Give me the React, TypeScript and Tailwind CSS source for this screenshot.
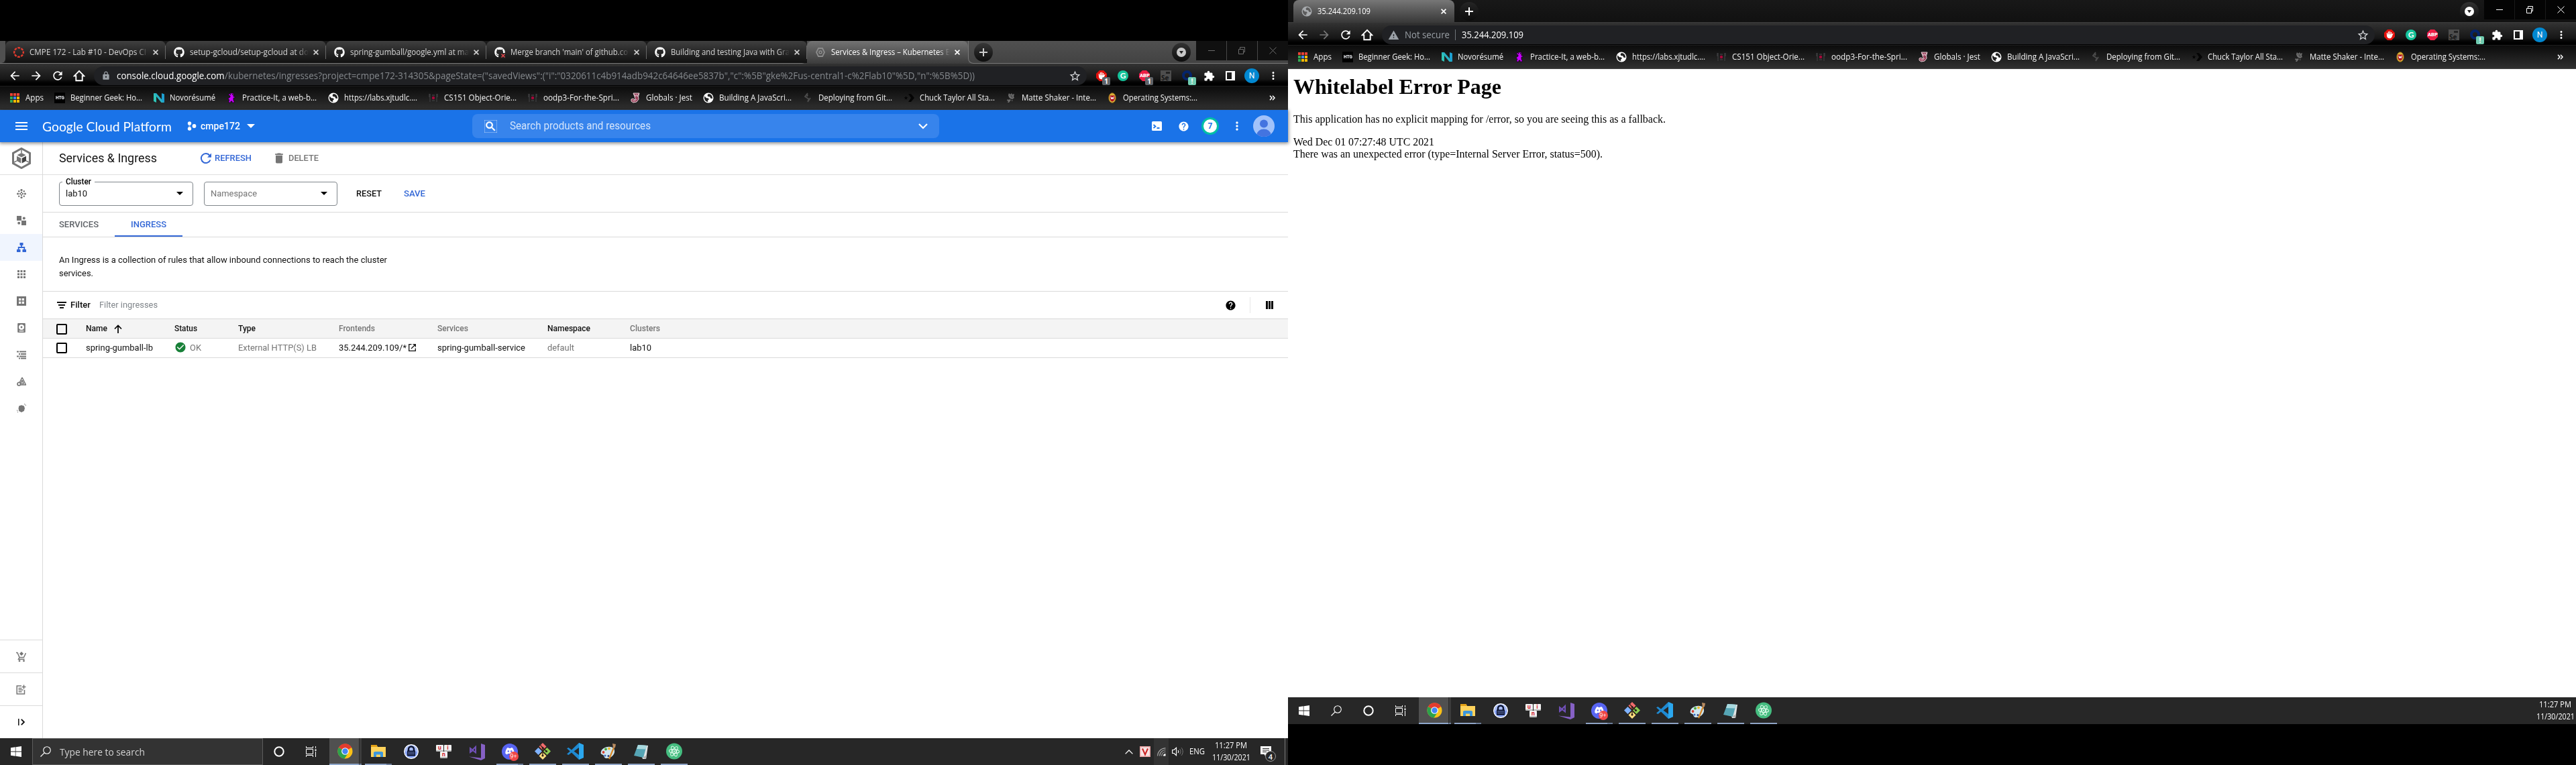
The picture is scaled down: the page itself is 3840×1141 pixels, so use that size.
import React, { useLayoutEffect, useRef } from "react";
import { FaGithub } from "react-icons/fa";
import {
  MdLock, MdStarBorder, MdExtension, MdMoreVert, MdSearch, MdDelete,
  MdCheckCircle, MdHelp, MdWarning, MdRefresh, MdArrowBack, MdArrowForward,
} from "react-icons/md";

/** One line of text drawn to an exact width. */
function Fit({ w, className = "", children }: { w: number; className?: string; children: React.ReactNode }) {
  const ref = useRef<HTMLSpanElement>(null);
  useLayoutEffect(() => {
    const el = ref.current;
    if (!el) return;
    el.style.transform = "none";
    const natural = el.getBoundingClientRect().width;
    if (natural > 0) el.style.transform = `scaleX(${w / natural})`;
  }, [w, children]);
  return (
    <span className={"block shrink-0 whitespace-nowrap " + className} style={{ width: w }}>
      <span ref={ref} className="inline-block origin-left">{children}</span>
    </span>
  );
}

/* ---------- favicons ---------- */

const Globe = ({ color = "#fff", hole = "#222" }: { color?: string; hole?: string }) => (
  <svg width="16" height="16" viewBox="0 0 16 16">
    <circle cx="8" cy="8" r="7.5" fill={color} />
    <path d="M2.3 5.2 5 8.2l3 .3.8 2-1.8 1.3.4 2.2C4.500 14 2 11 1.900 8z" fill={hole} />
    <path d="M8.200 2 6.500 3.800l.8 2.200 2.800.3 1.300 2.400 2.600.2C14.300 5 11.600 2 8.200 2z" fill={hole} />
  </svg>
);

const Canvas = () => (
  <svg width="16" height="16" viewBox="0 0 16 16">
    <circle cx="8" cy="8" r="6.800" fill="none" stroke="#e23b2e" strokeWidth="2.400" strokeDasharray="3.800 1.540" strokeDashoffset="1.900" />
  </svg>
);

const AppsGrid = () => {
  const cols = ["#ea4335", "#ea4335", "#ea4335", "#34a853", "#4285f4", "#fbbc04", "#34a853", "#fbbc04", "#fbbc04"];
  return (
    <span className="grid grid-cols-3 gap-px">
      {cols.map((c, i) => <span key={i} className="size-1" style={{ background: c }} />)}
    </span>
  );
};

const Htg = () => (
  <span className="flex size-4 items-center justify-center bg-black">
    <Fit w={13} className="font-[Roboto] text-[8px] leading-none font-black text-gray-200">HTG</Fit>
  </span>
);

const Novo = () => (
  <svg width="16" height="14" viewBox="0 0 16 14">
    <path d="M0 0 4 1v13L0 12z" fill="#2fc4b6" />
    <path d="M0 0h4l12 14h-4.500z" fill="#29b1c4" />
    <path d="M12 0l4 1.500V14l-4-3z" fill="#1e9fd0" />
  </svg>
);

const Dragon = () => (
  <svg width="14" height="16" viewBox="0 0 14 16">
    <path d="M5 1h5v5h2v2h-2v4h1v3H8v-2H6v2H3v-2l1-2-2-1 1-2 2-1V5L3 4V2h2z" fill="#c800ff" stroke="#1a001f" strokeWidth=".8" />
    <rect x="5" y="2" width="1.200" height="1.500" fill="#111" /><rect x="8" y="2" width="1.200" height="1.500" fill="#111" />
  </svg>
);

const RedDot = () => (
  <svg width="16" height="16" viewBox="0 0 16 16">
    <path d="M3 2v12M13 2v12M6 4h4M6 12h4M2 2v5M14 2v5" stroke="#3c3c3e" strokeWidth="1.300" fill="none" />
    <circle cx="8" cy="8" r="2.200" fill="#a5093a" />
  </svg>
);

const Jest = () => (
  <svg width="14" height="16" viewBox="0 0 14 16">
    <path d="M4 1h9l-1.500 5 .5 4-3 4-5 1-3-2v-3l3-1 2 2 1-1-1-4z" fill="#99425b" stroke="#efe0e4" strokeWidth=".9" />
    <path d="M5 2l2 4 1.500-3L10 6l2-4M3 11l2 2 4-3" stroke="#efe0e4" strokeWidth=".8" fill="none" />
  </svg>
);

const Netlify = () => (
  <svg width="12" height="16" viewBox="0 0 12 16">
    <path d="M6 1 2 6l6 4-2 3M6 3l-1 3M10 8l-4 6" stroke="#4d4d4d" strokeWidth="1.800" fill="none" />
  </svg>
);

const Converse = () => (
  <svg width="16" height="16" viewBox="0 0 16 16">
    <path d="M3.500 5l.8 2 2 .2-1.500 1.300.5 2.100-1.800-1.100-1.800 1.100.5-2.100L.700 7.200l2-.2z" fill="#050505" />
    <path d="M7 2h4l5 6-5 6H7l4-6z" fill="#050505" />
  </svg>
);

const Shaker = () => (
  <svg width="14" height="16" viewBox="0 0 14 16">
    <path d="M4 1l2 2 2-2 1 2 3-1-1 4 1 2-3 2-3-1-2-2-1-3zM5 10l2 1-3 4H2l1-2-2-1 1-2 2 1zM8 11l2 1-2 1z" fill="#6d6d6d" />
    <path d="M5 4l4 3M8 3l1 5" stroke="#333" strokeWidth=".7" />
  </svg>
);

const Crest = () => (
  <svg width="12" height="16" viewBox="0 0 12 16">
    <ellipse cx="6" cy="8" rx="5.400" ry="7.400" fill="#d9b23a" stroke="#6b4d0c" strokeWidth=".8" />
    <path d="M2.500 4.500h7V9c0 2-1.500 3.500-3.500 4.500C4 12.500 2.500 11 2.500 9z" fill="#b01020" />
    <path d="M3.800 6l1 4L6 7l1.200 3 1-4" stroke="#fff" strokeWidth="1" fill="none" />
  </svg>
);

const GcpHex = () => (
  <svg width="14" height="16" viewBox="0 0 14 16">
    <path d="M4 2h6l3 6-3 6H4L1 8z" fill="none" stroke="#8c8c8c" strokeWidth="1.800" />
    <circle cx="7" cy="8" r="2" fill="none" stroke="#8c8c8c" strokeWidth="1.500" />
  </svg>
);

const GithubFailed = () => (
  <span className="relative block size-4">
    <FaGithub size={16} color="#fff" />
    <svg className="absolute right-[-1px] bottom-[-1px] bg-[#222]" width="8" height="8" viewBox="0 0 8 8">
      <path d="M1.500 1.500l5 5M6.500 1.500l-5 5" stroke="#e5484d" strokeWidth="1.500" />
    </svg>
  </span>
);

/* ---------- browser chrome ---------- */

const Cross = ({ color = "#d0d0d0" }: { color?: string }) => (
  <svg width="8" height="8" viewBox="0 0 8 8"><path d="M.6.6l6.800 6.800M7.400.6.6 7.400" stroke={color} strokeWidth="1.700" /></svg>
);

function WindowButtons({ dim }: { dim: boolean }) {
  const c = dim ? "#6b6b6b" : "#fff";
  const cell = "flex w-[45px] items-center justify-center " + (dim ? "bg-[#101010]" : "bg-[#040404]");
  return (
    <div className={"flex h-[29px] gap-px " + (dim ? "bg-[#484848]" : "bg-[#1a1a1a]")}>
      <div className={cell}><svg width="10" height="10"><path d="M0 4.500h10" stroke={c} /></svg></div>
      <div className={cell}><svg width="11" height="11"><path d="M.5 3.500h7v7h-7zM2.500 3.500v-3h7v7h-2" fill="none" stroke={c} /></svg></div>
      <div className={cell}><svg width="11" height="11"><path d="M.5.5l10 10M10.500.5l-10 10" stroke={c} /></svg></div>
    </div>
  );
}

function TabSearch({ dim }: { dim: boolean }) {
  return (
    <div className="mr-2 flex h-[28px] w-[28px] items-center justify-center self-center rounded-full bg-linear-to-b from-[#333] to-[#0d0d0d]">
      <svg width="14" height="14" viewBox="0 0 14 14"><circle cx="7" cy="7" r="7" fill={dim ? "#c8c8c8" : "#fff"} /><path d="M4 5h6L7 9.500z" fill="#222" /></svg>
    </div>
  );
}

const NewTab = ({ dim }: { dim: boolean }) => (
  <div className={"ml-2 flex size-[28px] items-center justify-center self-center rounded-full bg-linear-to-b " + (dim ? "from-[#383838] to-[#0d0d0d]" : "from-[#252525] to-[#0c0c0c]")}>
    <svg width="12" height="12"><path d="M6 0v12M0 6h12" stroke={dim ? "#ccc" : "#fff"} strokeWidth="2" /></svg>
  </div>
);

type TabInfo = { icon: React.ReactNode; title: string; w: number };

const TABS: TabInfo[] = [
  { icon: <Canvas />, title: "CMPE 172 - Lab #10 - DevOps CI", w: 174 },
  { icon: <FaGithub size={16} color="#fff" />, title: "setup-gcloud/setup-gcloud at do", w: 177 },
  { icon: <FaGithub size={16} color="#fff" />, title: "spring-gumball/google.yml at ma", w: 177 },
  { icon: <GithubFailed />, title: "Merge branch 'main' of github.co", w: 175 },
  { icon: <FaGithub size={16} color="#fff" />, title: "Building and testing Java with Gra", w: 177 },
];

function LeftTabs() {
  return (
    <div className="flex h-[34px] bg-linear-to-b from-[#505050] to-[#424242]">
      <div className="flex w-[1203px] rounded-br-lg border-b border-[#787878] bg-[#1a1a1a]">
        <div className="w-2 rounded-br-md bg-[#505050]" />
        {TABS.map((t, i) => (
          <div key={i} className="flex w-[239px] items-center rounded-t-lg bg-linear-to-b from-[#404040] to-[#111]">
            <span className="ml-3 flex w-4 justify-center">{t.icon}</span>
            <span className="ml-2 w-[177px] overflow-hidden mask-r-from-90%">
              <Fit w={t.w} className="font-['Open_Sans'] text-[12px] leading-5 text-[#d6d6d6]">{t.title}</Fit>
            </span>
            <span className="ml-[7px]"><Cross /></span>
            <span className="ml-auto h-5 w-px bg-[#666]" />
          </div>
        ))}
      </div>
      <div className="flex w-[240px] items-center rounded-t-lg bg-linear-to-b from-[#737373] to-[#3c3c3c]">
        <span className="ml-3 flex w-4 justify-center"><GcpHex /></span>
        <span className="ml-2 w-[177px] overflow-hidden mask-r-from-90%">
          <Fit w={177} className="font-['Open_Sans'] text-[12px] leading-5 text-white">Services &amp; Ingress – Kubernetes E</Fit>
        </span>
        <span className="ml-[7px]"><Cross color="#fff" /></span>
      </div>
      <div className="flex flex-1 rounded-bl-lg border-b border-l border-[#787878]">
        <NewTab dim />
        <div className="ml-auto flex"><TabSearch dim /><WindowButtons dim /></div>
      </div>
    </div>
  );
}

function RightTabs() {
  return (
    <div className="flex h-[34px] border-b border-[#3d3d3d] bg-linear-to-b from-[#181818] to-[#111]">
      <div className="ml-2 flex h-[34px] w-[240px] items-center rounded-t-lg bg-linear-to-b from-[#777] to-[#383838]">
        <span className="ml-3"><Globe color="#a8abae" hole="#5c5c5c" /></span>
        <Fit w={79} className="ml-2 font-['Open_Sans'] text-[12px] leading-5 text-white">35.244.209.109</Fit>
        <span className="mr-3 ml-auto"><Cross color="#fff" /></span>
      </div>
      <NewTab dim={false} />
      <div className="ml-auto flex"><TabSearch dim={false} /><WindowButtons dim={false} /></div>
    </div>
  );
}

const Cell = ({ children }: { children: React.ReactNode }) => (
  <div className="flex h-[28px] w-8 shrink-0 items-center justify-center">{children}</div>
);

const Badge = ({ children, className }: { children: React.ReactNode; className: string }) => (
  <span className={"absolute top-[10px] left-[9px] flex h-3 w-3 items-center justify-center rounded-[2px] font-['Open_Sans'] text-[10px] leading-none font-bold text-white " + className}>{children}</span>
);

function Toolbar({ dim, children }: { dim: boolean; children: React.ReactNode }) {
  const home = <svg width="18" height="18" viewBox="0 0 18 18"><path d="M9 1.800 1.800 9.200h2.500V16.200h9.400V9.200h2.500z" fill="none" stroke="#fff" strokeWidth="1.900" /></svg>;
  return (
    <div className="flex h-[33px] items-start bg-linear-to-b from-[#333] via-[#161616] via-70% to-black pt-1 pl-[6px]">
      <Cell><MdArrowBack size={20} color="#fff" /></Cell>
      <Cell><MdArrowForward size={20} color={dim ? "#fff" : "#777"} /></Cell>
      <Cell><MdRefresh size={20} color="#fff" /></Cell>
      <Cell>{home}</Cell>
      <div className="mr-[6px] ml-[6px] flex h-7 w-[1480px] shrink-0 items-center rounded-full bg-[#202124] pr-2">
        {children}
        <MdStarBorder size={19} color="#d5d7da" className="ml-auto" />
      </div>
      <Cell>
        <span className="relative block size-4">
          <svg width="16" height="16" viewBox="0 0 16 16"><path d="M5 0h6l5 5v6l-5 5H5l-5-5V5z" fill="#e3100c" /><path d="M4.500 8.500V5M6.500 8V3M8.500 8V2.800M10.500 8V4M4.500 8c0 6 6 6 7 1l1-2-2 1z" stroke="#fff" strokeWidth="1.300" fill="#fff" /></svg>
          {dim && <Badge className="bg-[#5f6368]">1</Badge>}
        </span>
      </Cell>
      <Cell><span className="flex size-4 items-center justify-center rounded-full bg-[#15c39a] font-[Lato] text-[12px] leading-none font-bold text-white">G</span></Cell>
      <Cell>
        <span className="relative block size-4">
          <svg width="16" height="16" viewBox="0 0 16 16"><path d="M5 0h6l5 5v6l-5 5H5l-5-5V5z" fill="#ed1e45" /></svg>
          <span className="absolute top-1 left-[1px] font-[Roboto] text-[7.500px] leading-[8px] font-black text-white">ABP</span>
          {dim && <Badge className="bg-[#5f6368]">1</Badge>}
        </span>
      </Cell>
      <Cell>
        <span className="relative block size-4 bg-[#4d4d4d]">
          <span className="absolute bottom-0 left-[1px] font-['Open_Sans'] text-[10px] leading-[10px] font-bold text-[#161616]">Se</span>
          <span className="absolute top-[2px] right-[2px] h-[3px] w-[6px] bg-[#222]" />
        </span>
      </Cell>
      <Cell>
        <span className="relative block size-4">
          <span className="block size-[15px] rounded-full border-4 border-[#04246b]" />
          <Badge className="bg-[#6fcbb0]">!</Badge>
        </span>
      </Cell>
      <Cell><MdExtension size={17} color="#fff" /></Cell>
      <Cell><span className="h-[14px] w-[14px] border-2 border-r-[5px] border-white" /></Cell>
      <Cell><span className="flex size-[22px] items-center justify-center rounded-full bg-[#0288d1] font-[Roboto] text-[12px] leading-none text-white">N</span></Cell>
      <Cell><MdMoreVert size={18} color="#fff" /></Cell>
    </div>
  );
}

/* icon, label, label width, distance to the next bookmark */
const BOOKMARKS: [React.ReactNode, string, number, number][] = [
  [<AppsGrid />, "Apps", 27, 67],
  [<Htg />, "Beginner Geek: Ho...", 107, 148],
  [<Novo />, "Novorésumé", 68, 108],
  [<Dragon />, "Practice-It, a web-b...", 111, 152],
  [<Globe />, "https://labs.xjtudlc....", 109, 149],
  [<RedDot />, "CS151 Object-Orie...", 108, 148],
  [<RedDot />, "oodp3-For-the-Spri...", 113, 153],
  [<Jest />, "Globals · Jest", 69, 109],
  [<Globe />, "Building A JavaScri...", 108, 148],
  [<Netlify />, "Deploying from Git...", 110, 151],
  [<Converse />, "Chuck Taylor All Sta...", 112, 152],
  [<Shaker />, "Matte Shaker - Inte...", 111, 151],
  [<Crest />, "Operating Systems:...", 111, 160],
];

function Bookmarks() {
  return (
    <div className="flex h-9 items-center border-t border-b border-t-[#1e1e1e] border-b-[#444] bg-linear-to-b from-[#0c0c0c] to-[#303030] pl-[14px]">
      {BOOKMARKS.map(([icon, label, w, pitch], i) => (
        <div key={i} className="flex shrink-0 items-center gap-2" style={{ width: pitch }}>
          <span className="flex w-4 shrink-0 justify-center">{icon}</span>
          <Fit w={w} className="font-['Open_Sans'] text-[12px] leading-5 text-[#f4f4f4]">{label}</Fit>
        </div>
      ))}
      <svg className="mr-[19px] ml-auto" width="9" height="8" viewBox="0 0 9 8"><path d="M1 .8 4 4 1 7.200M5 .8 8 4 5 7.200" fill="none" stroke="#fff" strokeWidth="1.500" /></svg>
    </div>
  );
}

/* ---------- Cloud console ---------- */

const Caret = ({ color = "#000" }: { color?: string }) => (
  <svg width="10" height="5" viewBox="0 0 10 5"><path d="M0 0h10L5 5z" fill={color} /></svg>
);

function ConsoleHeader() {
  return (
    <div className="relative z-10 flex h-12 shrink-0 items-center bg-[#1a73e8] pl-[23px] shadow-[0_1px_5px_1px_rgba(0,0,0,0.45)]">
      <svg width="18" height="12"><path d="M0 1h18M0 6h18M0 11h18" stroke="#fff" strokeWidth="2" /></svg>
      <Fit w={193} className="ml-[22px] font-[Lato] text-[20px] leading-6 text-white">Google Cloud Platform</Fit>
      <svg className="ml-[23px]" width="14" height="14" viewBox="0 0 14 14"><circle cx="3.500" cy="3" r="2.700" fill="#fff" /><circle cx="3.500" cy="11" r="2.700" fill="#fff" /><circle cx="10.500" cy="7" r="2.900" fill="#fff" /><path d="M2 5.500h3v3H2z" fill="#fff" opacity=".35" /></svg>
      <Fit w={59} className="ml-[6px] font-[Roboto] text-[15px] leading-5 font-medium text-white">cmpe172</Fit>
      <svg className="ml-[10px]" width="12" height="6" viewBox="0 0 12 6"><path d="M0 0h12L6 6z" fill="#fff" /></svg>
      <div className="ml-[324px] flex h-9 w-[696px] items-center rounded-lg bg-[#3784ec] pr-[17px] pl-[18px]">
        <MdSearch size={19} color="#fff" className="shrink-0" stroke="#fff" strokeWidth={0.8} />
        <Fit w={210} className="ml-[19px] font-[Roboto] text-[16px] leading-5 text-[#d3e4fb]">Search products and resources</Fit>
        <svg className="ml-auto" width="14" height="9" viewBox="0 0 14 9"><path d="M1 1l6 6 6-6" fill="none" stroke="#fff" strokeWidth="2.200" /></svg>
      </div>
      <div className="mr-4 ml-auto flex items-center">
        <span className="flex w-10 justify-center"><svg width="15" height="14" viewBox="0 0 15 14"><rect width="15" height="14" rx="1.500" fill="#fff" /><path d="M2.500 5l3 2.500-3 2.500M7.500 10h4" stroke="#1a73e8" strokeWidth="1.800" fill="none" /></svg></span>
        <span className="flex w-10 justify-center"><MdHelp size={17} color="#fff" /></span>
        <span className="flex w-10 justify-center"><span className="flex size-[26px] items-center justify-center rounded-full border-3 border-[#00bfa5] bg-white font-[Roboto] text-[12px] leading-none font-bold text-[#1a73e8]">7</span></span>
        <span className="flex w-10 justify-center"><MdMoreVert size={20} color="#fff" /></span>
        <span className="flex w-10 justify-center">
          <span className="size-8 overflow-hidden rounded-full bg-[#a1c2fa]"><svg width="32" height="32"><circle cx="16" cy="12.500" r="6" fill="#4374e0" /><ellipse cx="16" cy="29" rx="10.500" ry="8.500" fill="#4374e0" /></svg></span>
        </span>
      </div>
    </div>
  );
}

const G = "#757575";
const SIDE_ICONS: React.ReactNode[] = [
  <g fill={G}>
    {[[7, 1.5], [7, 12.5], [1.6, 7], [12.4, 7]].map(([x, y]) => <circle key={x + "-" + y} cx={x} cy={y} r="1.600" />)}
    {[[7, 5], [7, 9], [5, 7], [9, 7], [3.2, 3.2], [10.8, 3.2], [3.2, 10.8], [10.8, 10.8]].map(([x, y]) => <circle key={x + "_" + y} cx={x} cy={y} r="1.200" />)}
  </g>,
  <g fill={G}><path d="M0 0h7v7H0zM7 7h7v7H7z" /><circle cx="10.800" cy="3.500" r="2" /><circle cx="3.200" cy="10.800" r="2" /></g>,
  <g fill="#3367d6"><path d="M4.500 0h5v4h-5zM0 10h5.500v4H0zM8.500 10H14v4H8.500z" /><path d="M7 4v3M2.700 10V7h8.600v3" stroke="#3367d6" strokeWidth="1.800" fill="none" /></g>,
  <g fill={G}>{[0, 1, 2].flatMap((r) => [0, 1, 2].map((c) => <rect key={r + "" + c} x={1 + c * 4.5} y={1 + r * 4.5} width="3" height="3" />))}</g>,
  <g fill={G}><path fillRule="evenodd" d="M0 0h14v14H0zM3 3v3.300h3.300V3zM7.700 3v3.300H11V3zM3 7.700V11h3.300V7.700zM7.700 7.700V11H11V7.700z" /></g>,
  <g><rect x="1.200" width="11.600" height="14" rx="1" fill={G} /><circle cx="7" cy="6" r="4" fill="#fff" /><circle cx="7" cy="6" r="1.400" fill={G} /><path d="M3.500 11.800h7" stroke="#fff" strokeWidth="1.300" /></g>,
  <g fill={G}><path d="M0 1.500h3v2H0zM4 1.500h10v2H4zM3 5h2v2H3zM6 5h8v2H6zM0 8.500h3v2H0zM4 8.500h10v2H4zM3 11.500h2v2H3zM6 11.500h8v2H6z" /></g>,
  <g><path d="M8 1l5.500 11H6M8 1 4.500 8M8 5l-2 4.500 3 1M8 5l2.500 6" fill="none" stroke={G} strokeWidth="1.500" /><circle cx="3.300" cy="10.700" r="2.300" fill="none" stroke={G} strokeWidth="1.700" /></g>,
  <g><path d="M7 2.200l3.800 1.300L12 7l-1.200 4L7 13l-3.800-2L2.500 7l.8-3.500z" fill={G} /><path d="M11 .7l2 .5.500 2.300M.7 9.500l.4 3 1.900.6" stroke={G} fill="none" strokeDasharray="1.500 1" /></g>,
];

function Sidebar() {
  return (
    <div className="flex w-16 shrink-0 flex-col border-r border-[#dadada]">
      <div className="flex h-[49px] items-center justify-center border-b border-[#e0e0e0]">
        <svg width="28" height="32" viewBox="0 0 28 32">
          <path d="M14 1.500 26.500 8.500v15L14 30.500 1.500 23.500v-15z" fill="none" stroke="#757575" strokeWidth="3" />
          <path d="M14 8l6.500 3.300L14 14.500l-6.500-3.200z" fill="#757575" />
          <path d="M7 12.700l6.300 3.200v7.600L7 20z" fill="#757575" /><path d="M21 12.700l-6.300 3.200v7.600L21 20z" fill="#424242" />
          <path d="M14 2v6M3 22l4-2.200M25 22l-4-2.200" stroke="#757575" strokeWidth="1.500" />
        </svg>
      </div>
      <div className="mt-2 flex flex-col">
        {SIDE_ICONS.map((icon, i) => (
          <div key={i} className={"flex h-10 items-center justify-center " + (i === 2 ? "bg-[#f0f5fe]" : "")}>
            <svg width="14" height="14" viewBox="0 0 14 14">{icon}</svg>
          </div>
        ))}
      </div>
      <div className="mt-auto flex flex-col">
        <div className="flex h-[49px] items-center justify-center border-t border-[#dadada]">
          <svg width="15" height="15" viewBox="0 0 15 15" fill="none" stroke={G} strokeWidth="1.500"><path d="M0 1.500h2l3 7h6.500l3-6.500M5 8.500l-1.500 2.700h9" /><circle cx="5" cy="13.600" r=".7" fill={G} /><circle cx="11.500" cy="13.600" r=".7" fill={G} /><path d="M8 0l3 3-3 3-3-3z" fill={G} stroke="none" /></svg>
        </div>
        <div className="flex h-[49px] items-center justify-center border-t border-[#dadada]">
          <svg width="15" height="15" viewBox="0 0 15 15" fill="none" stroke={G} strokeWidth="1.500"><path d="M8 2H1.200v12h11.300V8M3.500 5.500h5M3.500 8h7M3.500 10.800h5M11.500.5v6M8.800 3.500H14.500" /></svg>
        </div>
        <div className="flex h-[49px] items-center justify-center border-t border-[#dadada]">
          <svg width="10" height="10" viewBox="0 0 10 10"><path d="M.8 0v10" stroke="#111" strokeWidth="1.500" /><path d="M4.800.8 9 5 4.800 9.200" fill="none" stroke="#111" strokeWidth="1.900" /></svg>
        </div>
      </div>
    </div>
  );
}

const CheckBox = () => <span className="block size-4 shrink-0 rounded-[2px] border-2 border-black" />;

const OpenInNew = () => (
  <svg className="-mt-[2px]" width="11" height="11" viewBox="0 0 11 11" fill="none" stroke="#111" strokeWidth="1.300"><path d="M4.500.7H.7v9.600h9.600V6.500M6.500.7h3.800v3.800M10 1 4 7" /></svg>
);

/* table columns: heading, heading width, heading is sortable, column width */
const COLUMNS: [string, number, boolean, number][] = [
  ["Name", 32, true, 132], ["Status", 34, true, 95], ["Type", 26, true, 150], ["Frontends", 54, false, 147],
  ["Services", 46, false, 164], ["Namespace", 64, true, 123], ["Clusters", 45, false, 100],
];

function Table() {
  const cells: React.ReactNode[] = [
    <Fit w={100} className="text-[#111]">spring-gumball-lb</Fit>,
    <span className="flex items-center gap-[5px]"><MdCheckCircle size={18} color="#188038" className="-mt-[2px]" /><Fit w={17} className="text-[#757575]">OK</Fit></span>,
    <Fit w={117} className="text-[#757575]">External HTTP(S) LB</Fit>,
    <span className="flex items-center gap-[3px]"><Fit w={101} className="text-[#111]">35.244.209.109/*</Fit><OpenInNew /></span>,
    <Fit w={131} className="text-[#111]">spring-gumball-service</Fit>,
    <Fit w={40} className="text-[#757575]">default</Fit>,
    <Fit w={32} className="text-[#111]">lab10</Fit>,
  ];
  return (
    <div className="font-[Roboto] text-[13px] leading-5">
      <div className="flex h-[29px] items-center border-b border-[#dadada] bg-[#f4f4f4] pl-5">
        <span className="mt-[2px] mr-7"><CheckBox /></span>
        {COLUMNS.map(([label, w, sortable, col], i) => (
          <div key={label} className="flex items-center" style={{ width: col }}>
            <Fit w={w} className={"text-[12px] font-medium " + (sortable ? "text-[#111]" : "text-[#757575]")}>{label}</Fit>
            {i === 0 && <svg className="ml-[10px]" width="12" height="13" viewBox="0 0 12 13"><path d="M6 13V1.500M1 6.500l5-5 5 5" fill="none" stroke="#000" strokeWidth="1.700" /></svg>}
          </div>
        ))}
      </div>
      <div className="flex h-[29px] items-center border-b border-[#dadada] pl-5">
        <span className="mr-7"><CheckBox /></span>
        {cells.map((c, i) => <div key={i} style={{ width: COLUMNS[i][3] }}>{c}</div>)}
      </div>
    </div>
  );
}

function Console() {
  return (
    <div className="flex flex-1 flex-col bg-white font-[Roboto]">
      <ConsoleHeader />
      <div className="flex flex-1">
        <Sidebar />
        <div className="flex flex-1 flex-col">
          <div className="flex h-[49px] items-center border-b border-[#e0e0e0] pl-6">
            <Fit w={146} className="text-[18px] leading-6 text-[#111]">Services &amp; Ingress</Fit>
            <svg className="ml-[65px]" width="17" height="16" viewBox="0 0 17 16"><path d="M14.500 10.500A7 7 0 1 1 13.500 3.800" fill="none" stroke="#3367d6" strokeWidth="2" /><path d="M16 .5v6.300H10z" fill="#3367d6" /></svg>
            <Fit w={55} className="ml-1 text-[13px] leading-5 font-medium text-[#3367d6]">REFRESH</Fit>
            <MdDelete size={20} color="#757575" className="ml-[31px]" />
            <Fit w={45} className="ml-[4px] text-[13px] leading-5 font-medium text-[#757575]">DELETE</Fit>
          </div>
          <div className="flex h-14 items-center border-b border-[#dadada] pl-6">
            <div className="relative flex h-9 w-[200px] items-center justify-between rounded border border-[#80868b] pr-[14px] pl-[9px]">
              <span className="absolute -top-[11px] left-1 bg-white px-[5px]"><Fit w={38} className="text-[12px] leading-5 font-medium text-black">Cluster</Fit></span>
              <Fit w={32} className="text-[13px] leading-5 text-[#111]">lab10</Fit><Caret />
            </div>
            <div className="ml-4 flex h-9 w-[199px] items-center justify-between rounded border border-[#80868b] pr-[14px] pl-[9px]">
              <Fit w={69} className="text-[13px] leading-5 text-[#757575]">Namespace</Fit><Caret />
            </div>
            <Fit w={38} className="ml-7 text-[13px] leading-5 font-medium text-[#111]">RESET</Fit>
            <Fit w={32} className="ml-[33px] text-[13px] leading-5 font-medium text-[#3367d6]">SAVE</Fit>
          </div>
          <div className="flex h-[37px] items-stretch border-b border-[#dadada] text-[13px] leading-[36px] font-medium">
            <Fit w={59} className="ml-6 text-[#5f6368]">SERVICES</Fit>
            <div className="ml-6 w-[101px] border-b-2 border-[#3367d6] pl-6 text-[#3367d6]"><Fit w={53}>INGRESS</Fit></div>
          </div>
          <div className="h-[81px] border-b border-[#dadada] pt-6 pl-6 text-[13px] leading-5 text-[#111]">
            <Fit w={489}>An Ingress is a collection of rules that allow inbound connections to reach the cluster</Fit>
            <Fit w={51}>services.</Fit>
          </div>
          <div className="flex h-[41px] items-center border-b border-[#dadada] pl-[21px] text-[13px] leading-5">
            <svg width="14" height="10" viewBox="0 0 14 10"><path d="M0 1h14M2 5h10M4 9h6" stroke="#111" strokeWidth="2" /></svg>
            <Fit w={30} className="ml-[6px] font-medium text-[#111]">Filter</Fit>
            <Fit w={87} className="ml-[13px] text-[#80868b]">Filter ingresses</Fit>
            <MdHelp size={17} color="#000" className="ml-auto" />
            <span className="ml-5 h-6 w-px bg-[#e8e8e8]" />
            <svg className="mr-[22px] ml-[23px]" width="11" height="12"><path d="M0 0h3v12H0zM4 0h3v12H4zM8 0h3v12H8z" /></svg>
          </div>
          <Table />
        </div>
      </div>
    </div>
  );
}

/* ---------- taskbar ---------- */

const WinLogo = () => <svg width="16" height="16" viewBox="0 0 16 16" fill="#fff"><path d="M0 2.300 6.800 1.300v6.300H0zM7.500 1.200 16 0v7.600H7.500zM0 8.400h6.800v6.300L0 13.700zM7.500 8.400H16V16l-8.500-1.200z" /></svg>;
const Lens = () => <svg width="16" height="16" viewBox="0 0 16 16"><circle cx="10" cy="6" r="5.300" fill="none" stroke="#fff" strokeWidth="1.100" /><path d="M6.200 9.800.5 15.500" stroke="#fff" strokeWidth="1.200" /></svg>;
const Cortana = () => <svg width="16" height="16"><circle cx="8" cy="8" r="6.700" fill="none" stroke="#fff" strokeWidth="2" /></svg>;
const TaskView = () => <svg width="16" height="16" viewBox="0 0 16 16" fill="none" stroke="#fff"><path d="M.5 0v2.500h10V0M.5 16v-2.500h10V16M.5 4.500v7h10v-7zM14.500 0v3M14.500 8v8" /><path d="M14.500 4.500v2.500" strokeWidth="2" /></svg>;

const Chrome = () => (
  <svg width="23" height="23" viewBox="0 0 24 24">
    <circle cx="12" cy="12" r="11.500" fill="#fbc116" />
    <path d="M12 12 2 6.200A11.500 11.500 0 0 1 22 6.200z" fill="#e33b2e" /><path d="M12 6.200h10L20 4 12 1z" fill="#e33b2e" />
    <path d="M2 6.200A11.500 11.500 0 0 0 11 23.450L16.700 14.800 12 12z" fill="#2ba24c" />
    <circle cx="12" cy="12" r="5.600" fill="#fff" /><circle cx="12" cy="12" r="4.400" fill="#4285f4" />
  </svg>
);
const Explorer = () => (
  <svg width="22" height="19" viewBox="0 0 22 19"><path d="M0 1h9l1 2h12v15H0z" fill="#ffd35c" /><path d="M0 0h9v3H0z" fill="#e2a015" /><path d="M4 18v-7l2-1h10l2 1v7h-4v-3.500H8V18z" fill="#3d97dd" /></svg>
);
const KeePass = () => (
  <svg width="24" height="24" viewBox="0 0 24 24"><circle cx="12" cy="12" r="10.500" fill="#a9bdf7" stroke="#fff" strokeWidth="1.300" /><circle cx="12" cy="12" r="11.500" fill="none" stroke="#111" strokeWidth=".8" /><path d="M3 12a9 9 0 0 0 18 0z" fill="#7f9bf0" /><path d="M8 11V8.500a4 4 0 0 1 8 0V11" fill="none" stroke="#0b1330" strokeWidth="2.500" /><rect x="6" y="10.500" width="12" height="8" fill="#0b1330" /><path d="M7 13h10M7 15.500h10" stroke="#91a6e8" strokeWidth=".8" /></svg>
);
const KeyCap = ({ c }: { c: string }) => (
  <span className="flex h-[10px] w-[11px] items-center justify-center rounded-[1px] border-b-2 border-[#bbb] bg-[#f3f3f3] font-['Open_Sans'] text-[8px] leading-none font-bold text-[#d0202a]">{c}</span>
);
const Unikey = () => (
  <span className="flex flex-col items-center"><span className="flex gap-[1px]"><KeyCap c="u" /><KeyCap c="i" /></span><KeyCap c="n" /></span>
);
const VisualStudio = () => (
  <svg width="24" height="26" viewBox="0 0 24 26"><path d="M18 1l6 2v20l-6 3-18-5.500 18 2z" fill="#8661c5" /><path d="M2 8v6l4-3zM2 8l8 6.500V6L2 14" fill="none" stroke="#7050b8" strokeWidth="2" /></svg>
);
const Discord = () => (
  <span className="relative flex size-6 items-center justify-center rounded-full bg-[#5865f2]">
    <svg width="14" height="11" viewBox="0 0 14 11"><path d="M3 .5 5 0l.5 1h3L9 0l2 .5c2 3 3 5.500 2.600 8.500L11 10.500l-1-1.500H4l-1 1.500L.4 9C0 6 1 3.500 3 .5z" fill="#fff" /><circle cx="4.800" cy="5.500" r="1.200" fill="#5865f2" /><circle cx="9.200" cy="5.500" r="1.200" fill="#5865f2" /></svg>
    <span className="absolute -right-[1px] -bottom-[2px] flex size-[14px] items-center justify-center rounded-full bg-[#f04747] font-['Open_Sans'] text-[9px] leading-none text-white">9+</span>
  </span>
);
const GitIcon = () => (
  <svg width="24" height="25" viewBox="0 0 24 25">
    <path d="M12 1l11.500 11.500L12 24 .5 12.500z" fill="#2b2119" />
    <path d="M12 0l5.500 5.500-5.500 5.500-5.500-5.500z" fill="#f36c6c" /><path d="M5.500 7l5.500 5.500L5.500 18 0 12.500z" fill="#80b3ff" /><path d="M18.500 7l5.500 5.500-5.500 5.500-5.500-5.500z" fill="#8ccf52" /><path d="M12 14l5.500 5.500L12 25l-5.500-5.500z" fill="#ffe080" />
    <path d="M8.500 3.500l9 9M12 7v12" stroke="#2b2119" strokeWidth="1.300" /><circle cx="12" cy="7.500" r="1.400" fill="#2b2119" /><circle cx="12" cy="19" r="1.600" fill="#2b2119" /><circle cx="17.500" cy="12.500" r="1.600" fill="#2b2119" />
  </svg>
);
const VsCode = () => (
  <svg width="25" height="25" viewBox="0 0 25 25"><path d="M18 0l7 3v19l-7 3L7 14.500 2.500 18 0 16.700 4.700 12.500 0 8.300 2.500 7 7 10.500zM18 7l-7.500 5.500L18 18z" fill="#1f8ad2" fillRule="evenodd" /><path d="M18 0l7 3v19l-7 3z" fill="#2ba7ee" /></svg>
);
const Paint = () => (
  <svg width="24" height="25" viewBox="0 0 24 25"><path d="M11 6c6-1 11 2 10 8-1 5-6 9-12 9-4 0-3-4-5-5-3-1-4-2-3-5 1-4 5-6.500 10-7z" fill="#cfe6f2" /><circle cx="4.500" cy="14" r="1.900" fill="#d8402f" /><circle cx="8" cy="9.500" r="1.900" fill="#4fa83d" /><circle cx="13" cy="8.500" r="1.900" fill="#f2bb2c" /><circle cx="7" cy="19" r="1.500" fill="#3567c4" /><circle cx="12" cy="19.500" r="1.500" fill="#2e3b7a" /><path d="M20 7l-7 17" stroke="#d98a2b" strokeWidth="2.300" /><path d="M18 1l5 1-1 5-3 1z" fill="#b98c62" /></svg>
);
const Notepad = () => (
  <svg width="22" height="24" viewBox="0 0 22 24"><path d="M6 2l15 1-3 20-5 0z" fill="#dfe3e4" /><path d="M6 2l13 1-5 18L0 18z" fill="#56a5b5" /><path d="M6 2l13 1-1.500 5.500L4 8z" fill="#a9d9df" /><path d="M13 21l5 2 1-6z" fill="#b3b3b3" /></svg>
);
const Atom = () => (
  <svg width="24" height="25" viewBox="0 0 24 25"><circle cx="12" cy="12.500" r="12" fill="#45bd80" /><g fill="none" stroke="#eafff3" strokeWidth="1"><ellipse cx="12" cy="12.500" rx="2.800" ry="8" transform="rotate(35 12 12.500)" /><ellipse cx="12" cy="12.500" rx="2.800" ry="8" transform="rotate(-25 12 12.500)" /><ellipse cx="12" cy="12.500" rx="2.800" ry="7.500" transform="rotate(95 12 12.500)" /></g><circle cx="12" cy="12.500" r="1.100" fill="#eafff3" /></svg>
);

/* icon and underline: 0 none, 1 one window, 2 several windows */
const PINNED: [React.ReactNode, number][] = [
  [<Explorer />, 2], [<KeePass />, 0], [<Unikey />, 0], [<VisualStudio />, 0], [<Discord />, 2], [<GitIcon />, 1],
  [<VsCode />, 1], [<Paint />, 1], [<Notepad />, 1], [<Atom />, 1],
];

const TaskCell = ({ children }: { children: React.ReactNode }) => <div className="flex w-12 items-center justify-center">{children}</div>;

function Clock() {
  return (
    <div className="flex w-[58px] flex-col items-center font-['Open_Sans'] text-[12px] leading-[18px] text-white">
      <Fit w={48}>11:27 PM</Fit>
      <Fit w={57}>11/30/2021</Fit>
    </div>
  );
}

function Taskbar({ main }: { main: boolean }) {
  return (
    <div className="flex h-10 shrink-0 bg-[#272727]">
      <TaskCell><WinLogo /></TaskCell>
      {main ? (
        <div className="flex w-[344px] items-center border border-[#5c5c5c] bg-[#333] pl-[11px]">
          <Lens />
          <Fit w={127} className="ml-[13px] font-['Open_Sans'] text-[15px] leading-5 text-[#d2d2d2]">Type here to search</Fit>
        </div>
      ) : (
        <TaskCell><Lens /></TaskCell>
      )}
      <TaskCell><Cortana /></TaskCell>
      <TaskCell><TaskView /></TaskCell>
      <div className="ml-[3px] flex w-12">
        <div className="flex w-11 flex-col items-center justify-end border-b-2 border-[#8fa8cc] bg-[#505050] pb-[7px] pl-[3px]"><Chrome /></div>
        <div className="w-1 border-b-2 border-l border-b-[#70839f] border-l-[#2b2b2b] bg-[#3c3c3c]" />
      </div>
      {PINNED.map(([icon, lines], i) => (
        <div key={i} className="flex w-[49px] flex-col items-center">
          <div className="flex h-[38px] items-center pt-[1px]">{icon}</div>
          <div className="flex h-[2px] w-10">
            {lines > 0 && <span className="flex-1 bg-[#8fa4c6]" />}
            {lines > 1 && <span className="w-2 bg-[#6b7c98]" />}
          </div>
        </div>
      ))}
      {main ? (
        <div className="ml-auto flex items-center">
          <svg width="12" height="7" viewBox="0 0 12 7"><path d="M.6 6.400 6 1l5.400 5.400" fill="none" stroke="#fff" strokeWidth="1.300" /></svg>
          <svg className="ml-[10px]" width="16" height="16"><rect width="16" height="16" fill="#e9a3a3" /><rect x="1.500" y="1.500" width="13" height="13" fill="#f6e4e4" /><path d="M4 3.500l4 9 4-9" fill="none" stroke="#c22" strokeWidth="2" /></svg>
          <span className="ml-[5px] flex h-10 w-[22px] items-center justify-center bg-[#333]">
            <svg width="13" height="13" viewBox="0 0 13 13" fill="none"><path d="M.7 12.500C.7 6 6 .8 12.500.8M3.700 12.500c0-5 4-9 8.800-9M6.700 12.500c0-3.500 2.500-6 5.800-6" stroke="#aaa" strokeWidth="1.200" /><path d="M9 12.500C9 10.500 10.500 9 12.500 9v3.500z" fill="#fff" /></svg>
          </span>
          <svg className="ml-[5px]" width="17" height="14" viewBox="0 0 17 14" fill="none" stroke="#fff"><path d="M.6 4.500h2.500L6.500 1.300v11.400L3.100 9.500H.6zM9 5c1 1.300 1 2.700 0 4" strokeWidth="1.200" /><path d="M11.500 3c2 2.500 2 5.500 0 8M14 1.200c3 3.600 3 8 0 11.600" stroke="#777" /></svg>
          <Fit w={23} className="ml-[9px] font-['Open_Sans'] text-[12px] leading-5 text-white">ENG</Fit>
          <span className="ml-[10px]"><Clock /></span>
          <span className="relative ml-[15px] block h-4 w-4">
            <svg width="16" height="15" viewBox="0 0 16 15"><path d="M0 0h16v12H9l-2 2.500L5.500 12H0z" fill="#fff" /><path d="M3 3.500h10M3 6h10M3 8.500h6" stroke="#272727" /></svg>
            <span className="absolute top-[7px] left-[7px] flex size-4 items-center justify-center rounded-full border border-[#999] bg-[#272727] font-['Open_Sans'] text-[11px] leading-none font-semibold text-white">4</span>
          </span>
          <span className="mr-1 ml-[20px] h-10 w-px bg-[#777]" />
        </div>
      ) : (
        <div className="mr-[2px] ml-auto flex items-center"><Clock /></div>
      )}
    </div>
  );
}

/* ---------- desktops ---------- */

export default function App() {
  return (
    <div className="flex h-[1141px] w-[3840px] bg-black">
      <div className="flex w-[1920px] flex-col pt-[61px]">
        <LeftTabs />
        <Toolbar dim>
          <MdLock size={14} color="#9aa0a6" className="ml-[11px] shrink-0" />
          <Fit w={160.500} className="ml-[9px] font-['Open_Sans'] text-[14px] leading-6 text-white">console.cloud.google.com</Fit>
          <Fit w={1118} className="font-['Open_Sans'] text-[14px] leading-6 text-[#85898d]">{'/kubernetes/ingresses?project=cmpe172-314305&pageState=("savedViews":("i":"0320611c4b914adb942c64646ee5837b","c":%5B"gke%2Fus-central1-c%2Flab10"%5D,"n":%5B%5D))'}</Fit>
        </Toolbar>
        <Bookmarks />
        <Console />
        <Taskbar main />
      </div>
      <div className="flex w-[1920px] flex-col">
        <RightTabs />
        <Toolbar dim={false}>
          <MdWarning size={17} color="#9aa0a6" className="ml-[9px] shrink-0" />
          <Fit w={67} className="ml-2 font-['Open_Sans'] text-[14px] leading-6 text-[#9aa0a6]">Not secure</Fit>
          <span className="ml-2 h-4 w-px bg-[#70757a]" />
          <Fit w={92} className="ml-[9px] font-['Open_Sans'] text-[14px] leading-6 text-white">35.244.209.109</Fit>
        </Toolbar>
        <Bookmarks />
        <div className="h-[937px] bg-white px-2 pt-2 font-['Liberation_Serif'] text-[16px] leading-[18px] text-black">
          <h1 className="text-[32px] leading-[37px] font-bold"><Fit w={310}>Whitelabel Error Page</Fit></h1>
          <p className="mt-[21px]"><Fit w={555}>This application has no explicit mapping for /error, so you are seeing this as a fallback.</Fit></p>
          <div className="mt-4"><Fit w={210}>Wed Dec 01 07:27:48 UTC 2021</Fit></div>
          <div><Fit w={461}>There was an unexpected error (type=Internal Server Error, status=500).</Fit></div>
        </div>
        <Taskbar main={false} />
      </div>
    </div>
  );
}
